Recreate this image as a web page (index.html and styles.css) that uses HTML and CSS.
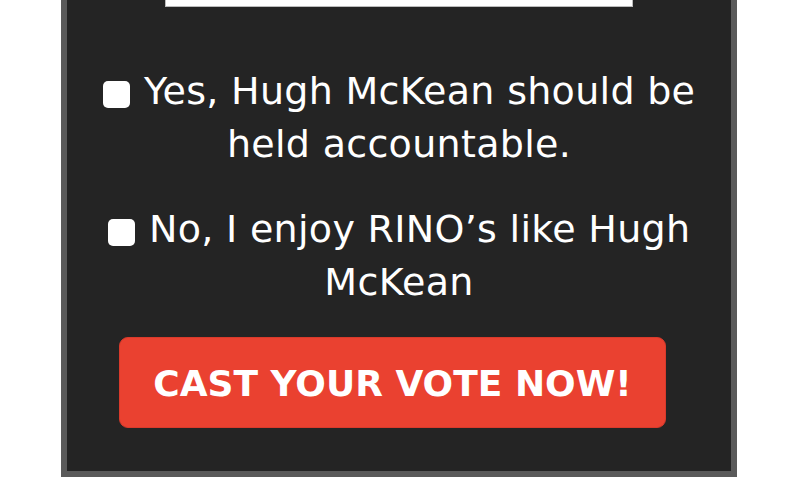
FILE: index.html
```html
<!DOCTYPE html>
<html lang="en">
<head>
    <meta charset="UTF-8">
    <meta name="viewport" content="width=device-width, initial-scale=1.0">
    <title>Poll - Hugh McKean</title>
    <link rel="stylesheet" href="styles.css">
</head>
<body>
    <!-- Poll box -->
    <div class="poll-box">
        <form id="pollForm">
            <input type="text" class="poll-input" id="voterEmail">

            <label class="poll-option">
                <input type="checkbox" class="poll-check" name="vote" value="yes">
                Yes, Hugh McKean should be held accountable.
            </label>

            <label class="poll-option">
                <input type="checkbox" class="poll-check" name="vote" value="no">
                No, I enjoy RINO’s like Hugh McKean
            </label>

            <button type="submit" class="vote-btn">CAST YOUR VOTE NOW!</button>
        </form>
    </div>
</body>
</html>
```

FILE: styles.css
```css
body { margin: 0; background: #fff; font-family: "DejaVu Sans", Verdana, sans-serif; }
.poll-box { width: 664px; margin: -66px 0 0 61px; background: #242424; border: 6px solid #5a5a5a; padding: 0 0 43px; color: #fff; }
.poll-input { display: block; box-sizing: border-box; width: 468px; height: 67px; margin: 0 auto 58px; border: 1px solid #bbb; background: #fff; }
.poll-option { display: block; text-align: center; font-size: 38px; line-height: 53px; letter-spacing: 0.3px; margin: 0 20px 32px; }
.poll-option:last-of-type { margin-bottom: 28px; }
.poll-check { appearance: none; -webkit-appearance: none; width: 27px; height: 27px; margin: 0 2px 0 0; background: #fff; border-radius: 5px; vertical-align: -4px; }
.vote-btn { display: block; width: 547px; height: 91px; margin: 1px 0 0 52px; padding-top: 3px; background: #ea4130; border: 1px solid #d93a2b; border-radius: 9px; color: #fff; font-family: "DejaVu Sans", Verdana, sans-serif; font-weight: bold; font-size: 36px; cursor: pointer; }
```
